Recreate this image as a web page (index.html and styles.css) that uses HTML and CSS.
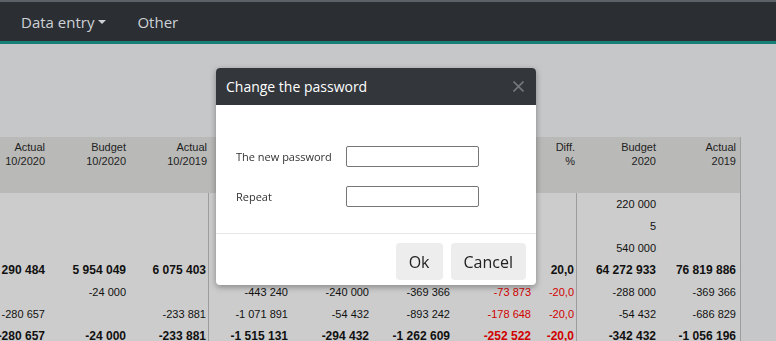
FILE: index.html
```html
<!DOCTYPE html>
<html lang="en">
<head>
<meta charset="utf-8">
<title>Report</title>
<link rel="stylesheet" href="styles.css">
</head>
<body>
<header class="navbar">
  <nav class="nav">
    <a class="nav-item">Data entry<span class="caret"></span></a>
    <a class="nav-item">Other</a>
  </nav>
</header>
<main class="page">
  <div class="report">
    <div class="row head">
      <div class="cell">Actual<br>10/2020</div>
      <div class="cell">Budget<br>10/2020</div>
      <div class="cell">Actual<br>10/2019</div>
      <div class="cell"></div>
      <div class="cell"></div>
      <div class="cell"></div>
      <div class="cell"></div>
      <div class="cell">Diff.<br>%</div>
      <div class="cell">Budget<br>2020</div>
      <div class="cell">Actual<br>2019</div>
    </div>
    <div class="row">
      <div class="cell"></div><div class="cell"></div><div class="cell sep"></div>
      <div class="cell"></div><div class="cell"></div><div class="cell"></div><div class="cell"></div>
      <div class="cell sep"></div><div class="cell">220 000</div><div class="cell"></div>
    </div>
    <div class="row">
      <div class="cell"></div><div class="cell"></div><div class="cell sep"></div>
      <div class="cell"></div><div class="cell"></div><div class="cell"></div><div class="cell"></div>
      <div class="cell sep"></div><div class="cell">5</div><div class="cell"></div>
    </div>
    <div class="row">
      <div class="cell"></div><div class="cell"></div><div class="cell sep"></div>
      <div class="cell"></div><div class="cell"></div><div class="cell"></div><div class="cell"></div>
      <div class="cell sep"></div><div class="cell">540 000</div><div class="cell"></div>
    </div>
    <div class="row total">
      <div class="cell">6 290 484</div><div class="cell">5 954 049</div><div class="cell sep">6 075 403</div>
      <div class="cell"></div><div class="cell"></div><div class="cell"></div><div class="cell"></div>
      <div class="cell sep">20,0</div><div class="cell">64 272 933</div><div class="cell">76 819 886</div>
    </div>
    <div class="row">
      <div class="cell"></div><div class="cell">-24 000</div><div class="cell sep"></div>
      <div class="cell">-443 240</div><div class="cell">-240 000</div><div class="cell">-369 366</div><div class="cell neg">-73 873</div>
      <div class="cell sep neg">-20,0</div><div class="cell">-288 000</div><div class="cell">-369 366</div>
    </div>
    <div class="row">
      <div class="cell">-280 657</div><div class="cell"></div><div class="cell sep">-233 881</div>
      <div class="cell">-1 071 891</div><div class="cell">-54 432</div><div class="cell">-893 242</div><div class="cell neg">-178 648</div>
      <div class="cell sep neg">-20,0</div><div class="cell">-54 432</div><div class="cell">-686 829</div>
    </div>
    <div class="row total">
      <div class="cell">-280 657</div><div class="cell">-24 000</div><div class="cell sep">-233 881</div>
      <div class="cell">-1 515 131</div><div class="cell">-294 432</div><div class="cell">-1 262 609</div><div class="cell neg">-252 522</div>
      <div class="cell sep neg">-20,0</div><div class="cell">-342 432</div><div class="cell">-1 056 196</div>
    </div>
  </div>
</main>

<div class="dialog" role="dialog">
  <div class="dialog-head">
    <span class="dialog-title">Change the password</span>
    <svg class="close" width="11" height="11" viewBox="0 0 11 11"><path d="M0.5 0.5 L10.5 10.5 M10.5 0.5 L0.5 10.5" stroke="#74777b" stroke-width="1.6" fill="none"/></svg>
  </div>
  <div class="dialog-body">
    <div class="field">
      <label class="label">The new password</label>
      <span class="input"></span>
    </div>
    <div class="field">
      <label class="label">Repeat</label>
      <span class="input"></span>
    </div>
  </div>
  <div class="dialog-foot">
    <button class="btn">Ok</button>
    <button class="btn">Cancel</button>
  </div>
</div>
</body>
</html>
```
FILE: styles.css
```css
html, body {
  margin: 0;
  padding: 0;
  height: 100%;
  overflow: hidden;
}
body {
  background: #c6c7c8;
  font-family: "Open Sans", sans-serif;
}
.navbar {
  height: 39px;
  background: #2b2e33;
  border-top: 2px solid #5b6167;
  border-bottom: 3px solid #167f77;
}
.nav {
  display: flex;
  align-items: center;
  height: 100%;
  padding-left: 21px;
  gap: 31px;
}
.nav-item {
  display: flex;
  align-items: center;
  color: #cdd2d7;
  font-size: 15px;
  line-height: 20px;
}
.caret {
  width: 0;
  height: 0;
  margin-left: 4px;
  border-left: 4.5px solid transparent;
  border-right: 4.5px solid transparent;
  border-top: 4.5px solid #cdd2d7;
}
.page {
  padding-top: 93px;
}
.report {
  width: 740px;
  border-right: 1px solid #9d9d9d;
  font-family: "Liberation Sans", Arial, sans-serif;
  font-size: 11px;
  color: #111;
}
.row {
  display: grid;
  grid-template-columns: 47px 81px 81px 81px 81px 81px 81px 44px 81px 80px;
  height: 22px;
  background: #cccccc;
}
.row.head {
  height: 56px;
  background: #b9b9b7;
  color: #1e1e1e;
}
.cell {
  box-sizing: border-box;
  display: flex;
  justify-content: flex-end;
  align-items: center;
  padding-right: 2px;
  white-space: nowrap;
  text-align: right;
}
.head .cell {
  align-items: flex-start;
  padding-top: 3px;
  line-height: 14px;
}
.cell.sep {
  border-right: 1px solid #9d9d9d;
}
.total .cell {
  font-weight: bold;
  font-size: 12px;
}
.cell.neg {
  color: #d10000;
}

/* dialog */
.dialog {
  position: fixed;
  left: 216px;
  top: 68px;
  width: 320px;
  background: #fff;
  border-radius: 4px;
  overflow: hidden;
  box-shadow: 0 2px 6px rgba(0,0,0,0.35);
}
.dialog-head {
  height: 37px;
  background: #33373c;
  display: flex;
  align-items: center;
  justify-content: space-between;
  padding: 0 12px 0 10px;
}
.dialog-title {
  color: #fff;
  font-size: 14px;
}
.close {
  display: block;
}
.dialog-body {
  padding: 41px 20px 26px;
  display: flex;
  flex-direction: column;
  gap: 19px;
  border-bottom: 1px solid #e3e6e9;
}
.field {
  display: flex;
  align-items: center;
}
.label {
  width: 110px;
  font-size: 11px;
  color: #333;
}
.input {
  box-sizing: border-box;
  width: 133px;
  height: 21px;
  border: 1px solid #767676;
  border-radius: 2px;
}
.dialog-foot {
  display: flex;
  justify-content: flex-end;
  gap: 8px;
  padding: 9px 10px 5px;
}
.btn {
  height: 37px;
  padding: 0 13px;
  border: 0;
  border-radius: 4px;
  background: #ededed;
  color: #222;
  font-family: "Open Sans", sans-serif;
  font-size: 16px;
}
```
